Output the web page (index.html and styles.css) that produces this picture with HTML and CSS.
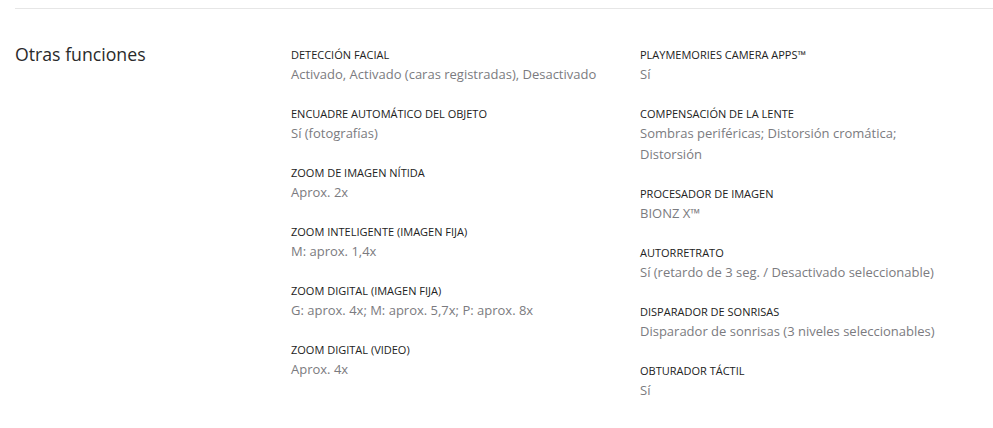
FILE: index.html
```html
<!DOCTYPE html>
<html lang="es">
<head>
<meta charset="utf-8">
<link rel="stylesheet" href="styles.css">
</head>
<body>
<div class="page">
  <div class="divider"></div>
  <section class="spec">
    <h2 class="spec-title">Otras funciones</h2>
    <div class="spec-col">
      <div class="item"><div class="label">Detección facial</div><div class="value">Activado, Activado (caras registradas), Desactivado</div></div>
      <div class="item"><div class="label">Encuadre automático del objeto</div><div class="value">Sí (fotografías)</div></div>
      <div class="item"><div class="label">Zoom de imagen nítida</div><div class="value">Aprox. 2x</div></div>
      <div class="item"><div class="label">Zoom inteligente (imagen fija)</div><div class="value">M: aprox. 1,4x</div></div>
      <div class="item"><div class="label">Zoom digital (imagen fija)</div><div class="value">G: aprox. 4x; M: aprox. 5,7x; P: aprox. 8x</div></div>
      <div class="item"><div class="label">Zoom digital (video)</div><div class="value">Aprox. 4x</div></div>
    </div>
    <div class="spec-col">
      <div class="item"><div class="label">PlayMemories Camera Apps™</div><div class="value">Sí</div></div>
      <div class="item"><div class="label">Compensación de la lente</div><div class="value value-multi">Sombras periféricas; Distorsión cromática; Distorsión</div></div>
      <div class="item"><div class="label">Procesador de imagen</div><div class="value">BIONZ X™</div></div>
      <div class="item"><div class="label">Autorretrato</div><div class="value">Sí (retardo de 3 seg. / Desactivado seleccionable)</div></div>
      <div class="item"><div class="label">Disparador de sonrisas</div><div class="value">Disparador de sonrisas (3 niveles seleccionables)</div></div>
      <div class="item"><div class="label">Obturador táctil</div><div class="value">Sí</div></div>
    </div>
  </section>
</div>
</body>
</html>
```

FILE: styles.css
```css
* { box-sizing: border-box; }
html, body { margin: 0; padding: 0; background: #fff; }
body { font-family: "Open Sans", "Noto Sans", sans-serif; color: #333; }
.page { padding: 8px 0 0 15px; }
.divider { height: 1px; background: #e6e6e6; }
.spec {
  display: grid;
  grid-template-columns: 276px 349px 1fr;
  align-items: start;
  padding-top: 37px;
}
.spec-title {
  margin: -4px 0 0 0;
  font-size: 17.7px;
  line-height: 24px;
  font-weight: 400;
  color: #2a2a2a;
}
.spec-col { display: flex; flex-direction: column; }
.item { margin-bottom: 21px; }
.label {
  font-size: 11px;
  line-height: 18px;
  text-transform: uppercase;
  color: #222;
}
.value {
  font-size: 13px;
  line-height: 20px;
  color: #7b7b80;
  max-width: 300px;
}
.value-multi { line-height: 20.5px; }
.spec-col:first-of-type .value { max-width: none; }
```
